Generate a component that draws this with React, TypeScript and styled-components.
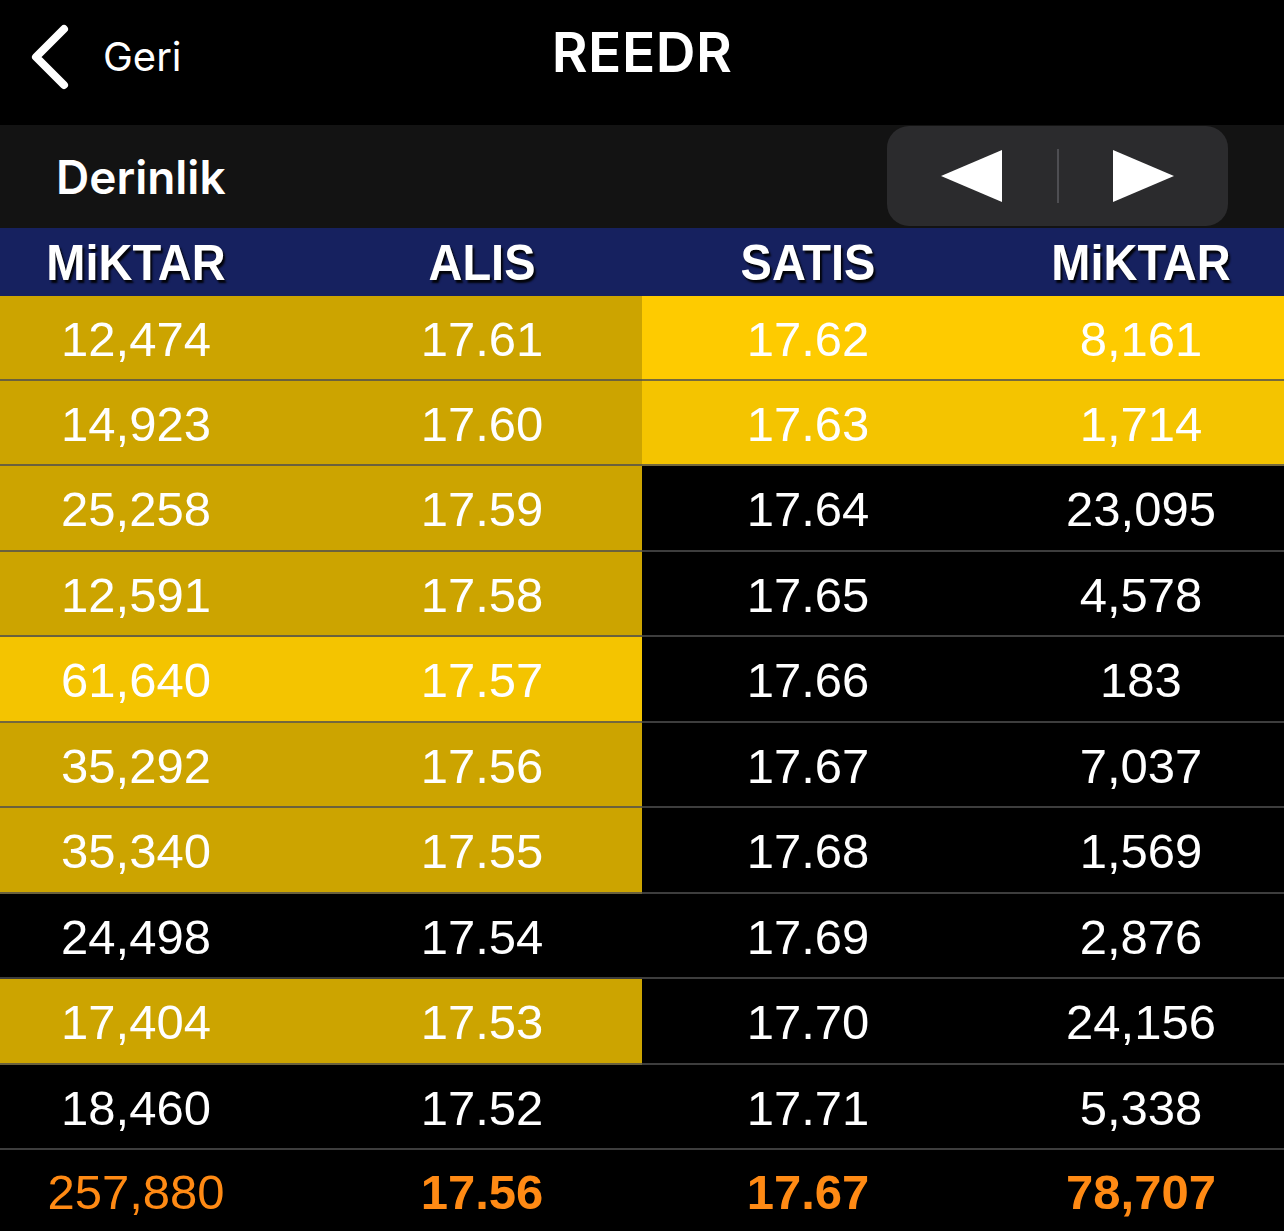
import React from "react";
import styled, { createGlobalStyle } from "styled-components";

const Global = createGlobalStyle`
  html, body { margin: 0; padding: 0; background: #000; }
  body { font-family: "Liberation Sans", Arial, sans-serif; }
`;

const Page = styled.div`
  width: 1284px;
  height: 1231px;
  background: #000;
  display: flex;
  flex-direction: column;
  overflow: hidden;
`;

const NavBar = styled.header`
  height: 125px;
  display: grid;
  grid-template-columns: 1fr auto 1fr;
  align-items: center;
  background: #000;
`;

const BackButton = styled.div`
  display: flex;
  align-items: center;
  gap: 33px;
  padding-left: 30px;
  margin-top: -12px;
  color: #fff;
  font-family: Inter, "Liberation Sans", sans-serif;
  font-size: 40px;
  font-weight: 400;
`;

const Title = styled.h1`
  margin: -22px 0 0;
  color: #fff;
  font-family: Inter, "Liberation Sans", sans-serif;
  font-size: 55px;
  font-weight: 600;
  letter-spacing: 0.5px;
`;

const SectionBar = styled.div`
  height: 103px;
  background: #131313;
  display: flex;
  align-items: center;
  justify-content: space-between;
  padding: 0 56px 0 56px;
`;

const SectionTitle = styled.div`
  color: #fff;
  font-family: Inter, "Liberation Sans", sans-serif;
  font-size: 46px;
  font-weight: 600;
`;

const Segmented = styled.div`
  width: 341px;
  height: 100px;
  align-self: flex-start;
  margin-top: 1px;
  background: #2b2b2d;
  border-radius: 22px;
  display: grid;
  grid-template-columns: 1fr 2px 1fr;
  align-items: center;
`;

const SegButton = styled.div`
  display: flex;
  justify-content: center;
  align-items: center;
`;

const SegDivider = styled.div`
  width: 2px;
  height: 54px;
  background: #4e4e52;
`;

const Row = styled.div<{ $h: number }>`
  display: flex;
  height: ${(p) => p.$h}px;
`;

const Half = styled.div<{ $bg: string; $cols: string; $line?: boolean }>`
  width: 642px;
  display: grid;
  grid-template-columns: ${(p) => p.$cols};
  justify-content: space-between;
  align-items: center;
  background: ${(p) => p.$bg};
  box-sizing: border-box;
  border-bottom: ${(p) => (p.$line ? "2px solid rgba(78,78,78,0.78)" : "none")};
`;

const HeadCell = styled.div`
  text-align: center;
  color: #fff;
  font-family: "Liberation Sans", Arial, sans-serif;
  font-weight: 700;
  font-size: 47px;
  text-shadow: 2px 3px 2px rgba(0, 0, 0, 0.9);
  transform: scaleY(1.06);
`;

const Cell = styled.div<{ $color?: string; $bold?: boolean }>`
  text-align: center;
  color: ${(p) => p.$color ?? "#fff"};
  font-family: "Liberation Sans", Arial, sans-serif;
  font-weight: ${(p) => (p.$bold ? 700 : 400)};
  font-size: 49px;
  padding-top: 2px;
`;

const LEFT_COLS = "272px 320px";
const RIGHT_COLS = "332px 286px";

const GOLD = "#cca400";
const YELLOW = "#fecb00";
const YELLOW2 = "#f4c400";
const BLACK = "#000";
const NAVY = "#16215f";
const ORANGE = "#ff8a14";

type Depth = { bq: string; bp: string; sp: string; sq: string; lb: string; rb: string };

const rows: Depth[] = [
  { bq: "12,474", bp: "17.61", sp: "17.62", sq: "8,161", lb: GOLD, rb: YELLOW },
  { bq: "14,923", bp: "17.60", sp: "17.63", sq: "1,714", lb: GOLD, rb: YELLOW2 },
  { bq: "25,258", bp: "17.59", sp: "17.64", sq: "23,095", lb: GOLD, rb: BLACK },
  { bq: "12,591", bp: "17.58", sp: "17.65", sq: "4,578", lb: GOLD, rb: BLACK },
  { bq: "61,640", bp: "17.57", sp: "17.66", sq: "183", lb: YELLOW2, rb: BLACK },
  { bq: "35,292", bp: "17.56", sp: "17.67", sq: "7,037", lb: GOLD, rb: BLACK },
  { bq: "35,340", bp: "17.55", sp: "17.68", sq: "1,569", lb: GOLD, rb: BLACK },
  { bq: "24,498", bp: "17.54", sp: "17.69", sq: "2,876", lb: BLACK, rb: BLACK },
  { bq: "17,404", bp: "17.53", sp: "17.70", sq: "24,156", lb: GOLD, rb: BLACK },
  { bq: "18,460", bp: "17.52", sp: "17.71", sq: "5,338", lb: BLACK, rb: BLACK },
];

const heights = [85, 85, 86, 85, 86, 85, 86, 85, 86, 85];

const Chevron = () => (
  <svg width="40" height="66" viewBox="0 0 40 66">
    <path d="M34 5 L6 33 L34 61" fill="none" stroke="#fff" strokeWidth="8" strokeLinecap="round" strokeLinejoin="round" />
  </svg>
);

const Triangle = ({ dir }: { dir: "left" | "right" }) => (
  <svg width="62" height="52" viewBox="0 0 62 52">
    {dir === "left" ? <polygon points="0,26 61,0 61,52" fill="#fff" /> : <polygon points="62,26 1,0 1,52" fill="#fff" />}
  </svg>
);

export default function App() {
  return (
    <>
      <Global />
      <Page>
        <NavBar>
          <BackButton>
            <Chevron />
            <span>Geri</span>
          </BackButton>
          <Title>REEDR</Title>
          <div />
        </NavBar>
        <SectionBar>
          <SectionTitle>Derinlik</SectionTitle>
          <Segmented>
            <SegButton>
              <Triangle dir="left" />
            </SegButton>
            <SegDivider />
            <SegButton>
              <Triangle dir="right" />
            </SegButton>
          </Segmented>
        </SectionBar>
        <Row $h={68}>
          <Half $bg={NAVY} $cols={LEFT_COLS}>
            <HeadCell>MiKTAR</HeadCell>
            <HeadCell>ALIS</HeadCell>
          </Half>
          <Half $bg={NAVY} $cols={RIGHT_COLS}>
            <HeadCell>SATIS</HeadCell>
            <HeadCell>MiKTAR</HeadCell>
          </Half>
        </Row>
        {rows.map((r, i) => (
          <Row key={i} $h={heights[i]}>
            <Half $bg={r.lb} $cols={LEFT_COLS} $line>
              <Cell>{r.bq}</Cell>
              <Cell>{r.bp}</Cell>
            </Half>
            <Half $bg={r.rb} $cols={RIGHT_COLS} $line>
              <Cell>{r.sp}</Cell>
              <Cell>{r.sq}</Cell>
            </Half>
          </Row>
        ))}
        <Row $h={81}>
          <Half $bg={BLACK} $cols={LEFT_COLS}>
            <Cell $color={ORANGE}>257,880</Cell>
            <Cell $color={ORANGE} $bold>17.56</Cell>
          </Half>
          <Half $bg={BLACK} $cols={RIGHT_COLS}>
            <Cell $color={ORANGE} $bold>17.67</Cell>
            <Cell $color={ORANGE} $bold>78,707</Cell>
          </Half>
        </Row>
      </Page>
    </>
  );
}
